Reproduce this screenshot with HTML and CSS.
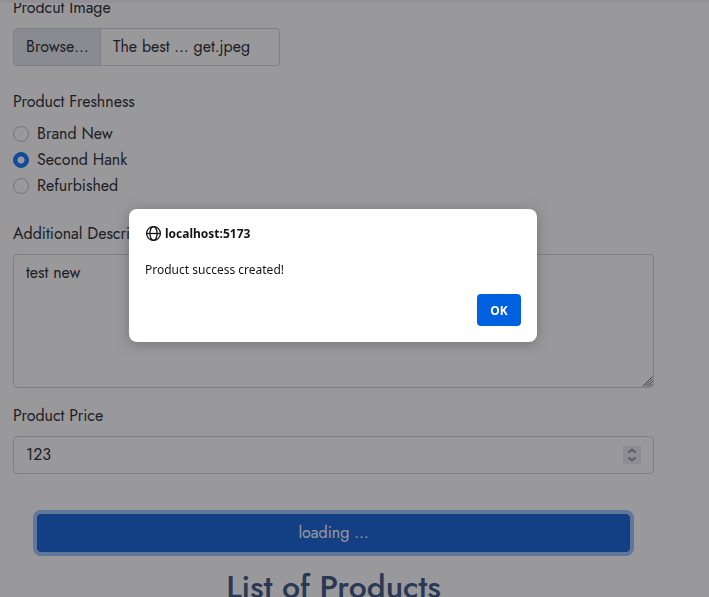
FILE: index.html
```html
<!DOCTYPE html>
<html lang="en">
<head>
  <meta charset="utf-8">
  <meta name="viewport" content="width=device-width, initial-scale=1">
  <title>Create Product</title>
  <link rel="stylesheet" href="styles.css">
</head>
<body>
  <main class="page">
    <form class="form">
      <div class="field field-image">
        <label class="label" for="image">Prodcut Image</label>
        <label class="file">
          <input class="file-input" id="image" type="file">
          <span class="file-button">Browse…</span>
          <span class="file-name">The best … get.jpeg</span>
        </label>
      </div>

      <fieldset class="field field-freshness">
        <legend class="label">Product Freshness</legend>
        <label class="option"><input class="radio" type="radio" name="freshness">Brand New</label>
        <label class="option"><input class="radio" type="radio" name="freshness" checked>Second Hank</label>
        <label class="option"><input class="radio" type="radio" name="freshness">Refurbished</label>
      </fieldset>

      <div class="field">
        <label class="label" for="description">Additional Description</label>
        <div class="control">
          <textarea class="input textarea" id="description">test new</textarea>
          <svg class="grip" viewBox="0 0 11 11" aria-hidden="true"><path d="M0.5 10.5l10-10M3 10.5L10.5 3M5.5 10.5l5-5M8 10.5L10.5 8"/></svg>
        </div>
      </div>

      <div class="field field-price">
        <label class="label" for="price">Product Price</label>
        <div class="control">
          <input class="input" id="price" type="number" value="123">
          <svg class="spinner" viewBox="0 0 18 18" aria-hidden="true"><path d="M5.5 6.5L9 3.5l3.5 3M5.5 11.5l3.5 3 3.5-3"/></svg>
        </div>
      </div>

      <button class="submit" type="button">loading ...</button>
    </form>
    <h2 class="heading">List of Products</h2>
  </main>

  <div class="backdrop">
    <section class="dialog" role="alertdialog" aria-labelledby="origin" aria-describedby="message">
      <div class="origin">
        <svg class="globe" viewBox="0 0 16 16" aria-hidden="true"><circle cx="8.5" cy="7.5" r="6.9"/><ellipse cx="8.5" cy="7.5" rx="3.6" ry="6.9"/><path d="M1.5 7.5h14"/></svg>
        <span id="origin">localhost:5173</span>
      </div>
      <p class="message" id="message">Product success created!</p>
      <button class="ok" type="button">OK</button>
    </section>
  </div>
</body>
</html>
```
FILE: styles.css
```css
* {
  box-sizing: border-box;
}

body {
  margin: 0;
  height: 100vh;
  overflow: hidden;
  background: #fff;
  color: #212529;
  font: 16px/24px Jost, Lato, sans-serif;
}

.page {
  height: 100vh;
  overflow: hidden;
  padding: 0 55px 0 13px;
  border-top: 3px solid #f0f0f4;
}

.form {
  margin-top: -7px;
}

.field {
  margin: 0 0 16px;
  padding: 0;
  border: 0;
}

.field-image {
  margin-bottom: 24px;
}

.field-freshness {
  margin-bottom: 22px;
}

.field-price {
  margin-bottom: 40px;
}

.label {
  display: block;
  margin-bottom: 8px;
  padding: 0;
}

.file {
  position: relative;
  display: flex;
  width: 267px;
  max-width: 100%;
  height: 38px;
  border: 1px solid #ced4da;
  border-radius: 4px;
  overflow: hidden;
}

.file-input {
  position: absolute;
  inset: 0;
  width: 100%;
  opacity: 0;
}

.file-button,
.file-name {
  padding: 6px 12px;
  white-space: nowrap;
}

.file-button {
  width: 87px;
  background: #e4e8ec;
  border-right: 1px solid #ced4da;
}

.option {
  display: flex;
  align-items: center;
  gap: 8px;
  margin-bottom: 2px;
}

.radio {
  appearance: none;
  width: 16px;
  height: 16px;
  margin: 0;
  border: 1px solid #bfbfbf;
  border-radius: 50%;
}

.radio:checked {
  border-color: #0d6efd;
  background: radial-gradient(circle, #fff 3px, #0d6efd 4px);
}

.control {
  position: relative;
}

.input {
  display: block;
  width: 100%;
  height: 38px;
  margin: 0;
  padding: 5px 12px 7px;
  border: 1px solid #ced4da;
  border-radius: 4px;
  background: #fff;
  color: inherit;
  font: inherit;
  appearance: textfield;
}

.input::-webkit-inner-spin-button {
  appearance: none;
  margin: 0;
}

.textarea {
  height: 134px;
  padding: 6px 12px;
  resize: none;
}

.grip {
  position: absolute;
  right: 1px;
  bottom: 1px;
  width: 11px;
  height: 11px;
  fill: none;
  stroke: #666;
}

.spinner {
  position: absolute;
  right: 13px;
  top: 10px;
  width: 18px;
  height: 18px;
  background: #e9e9ed;
  fill: none;
  stroke: #8f8f9d;
  stroke-width: 2;
}

.submit {
  display: block;
  width: calc(100% - 48px);
  height: 38px;
  margin: 0 24px 16px;
  padding: 0 12px;
  border: 1px solid #0a58ca;
  border-radius: 4px;
  background: #0b5ed7;
  box-shadow: 0 0 0 4px rgba(49, 132, 253, 0.5);
  color: #fff;
  font: inherit;
}

.heading {
  margin: 0;
  color: #335080;
  font-size: 32px;
  font-weight: 500;
  line-height: 38px;
  text-align: center;
}

.backdrop {
  position: fixed;
  inset: 0;
  padding: 209px 43px 0 0;
  background: rgba(28, 27, 34, 0.45);
}

.dialog {
  display: flex;
  flex-direction: column;
  width: 408px;
  max-width: 100%;
  margin: 0 auto;
  padding: 16px;
  border-radius: 8px;
  background: #fff;
  box-shadow: 0 2px 14px rgba(0, 0, 0, 0.25);
  color: #15141a;
  font: 12px/17px "Noto Sans", sans-serif;
}

.origin {
  display: flex;
  align-items: center;
  gap: 4px;
  font-weight: 700;
}

.globe {
  width: 16px;
  height: 16px;
  overflow: visible;
  fill: none;
  stroke: #15141a;
  stroke-width: 1.3;
}

.message {
  margin: 19px 0 16px;
}

.ok {
  align-self: flex-end;
  width: 44px;
  height: 32px;
  padding: 0;
  border: 0;
  border-radius: 4px;
  background: #0061e0;
  color: #fff;
  font: inherit;
  font-weight: 700;
}
```
